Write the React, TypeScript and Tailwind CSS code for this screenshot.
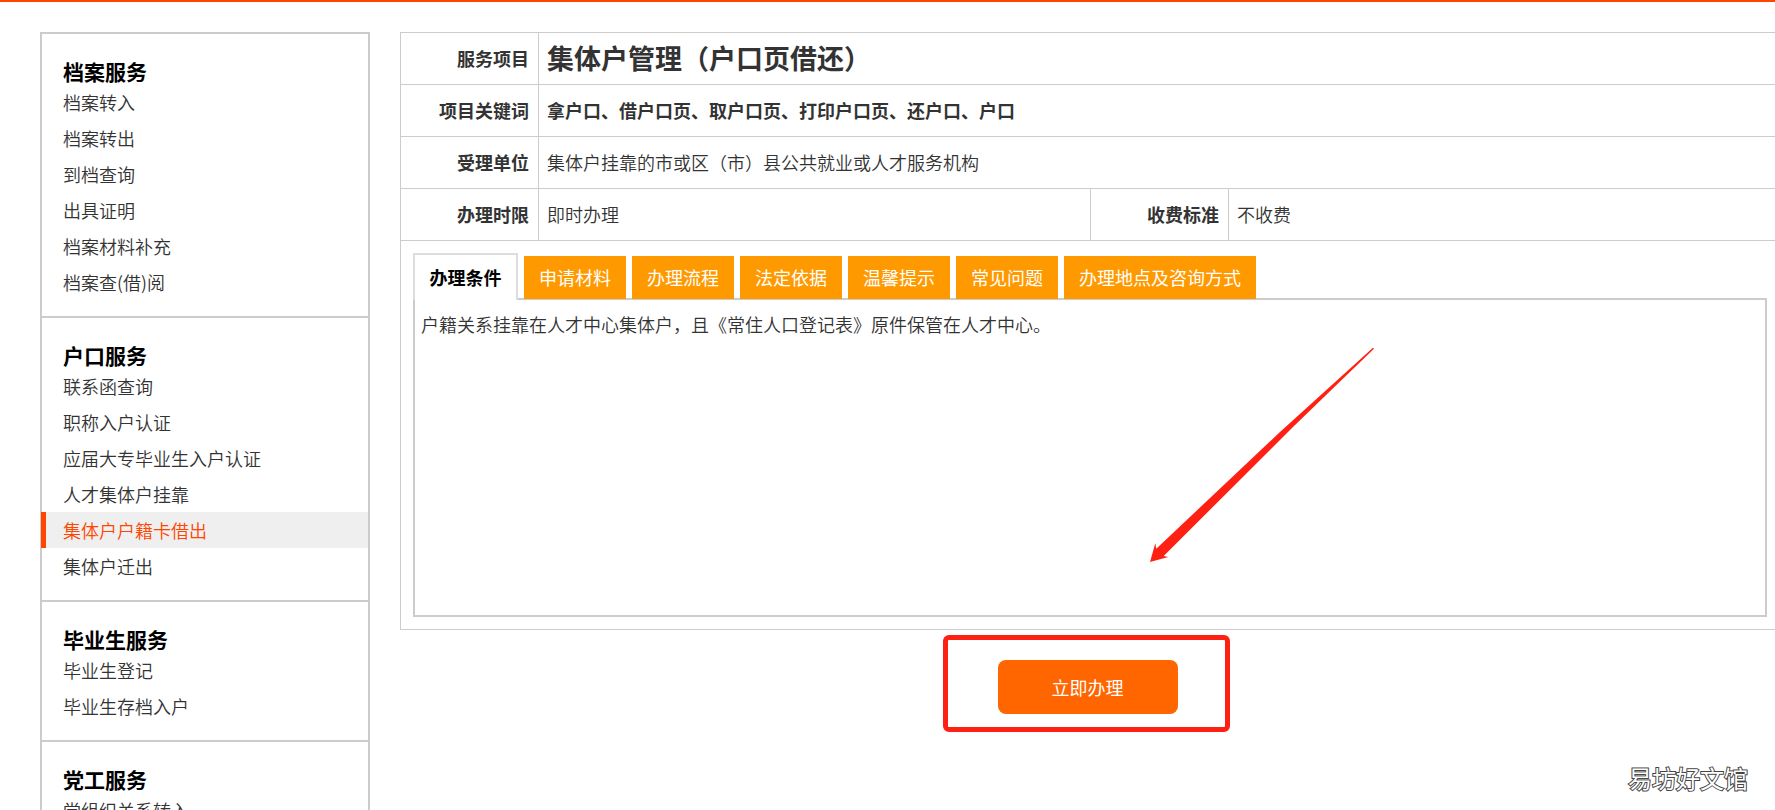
import { useState } from 'react'
import clsx from 'clsx'

const sections = [
  {
    title: '档案服务',
    items: ['档案转入', '档案转出', '到档查询', '出具证明', '档案材料补充', '档案查(借)阅'],
  },
  {
    title: '户口服务',
    items: ['联系函查询', '职称入户认证', '应届大专毕业生入户认证', '人才集体户挂靠', '集体户户籍卡借出', '集体户迁出'],
  },
  { title: '毕业生服务', items: ['毕业生登记', '毕业生存档入户'] },
  { title: '党工服务', items: ['党组织关系转入'] },
]

const tabs = ['办理条件', '申请材料', '办理流程', '法定依据', '温馨提示', '常见问题', '办理地点及咨询方式']

const labelCell = 'h-[52px] border-r border-b border-[#ccc] px-[9px] pb-0.5 text-right font-bold'
const valueCell = 'h-[52px] border-b border-[#ccc] px-2 pb-0.5 text-left'

function Sidebar({ current }: { current: string }) {
  return (
    <nav aria-label="服务导航" className="w-[330px] shrink-0 border-2 border-[#ccc]">
      {sections.map((section) => (
        <section key={section.title} className="border-b-2 border-[#ccc] pt-6 pb-4">
          <h2 className="pl-[21px] text-[21px] leading-[26px] font-bold text-black">{section.title}</h2>
          <ul>
            {section.items.map((item) => (
              <li key={item}>
                <a
                  href="#"
                  aria-current={item === current ? 'page' : undefined}
                  className={clsx(
                    '-ml-px block border-l-[5px] pl-[17px] leading-9',
                    item === current ? 'border-[#ff4500] bg-[#efefef] text-[#ff4500]' : 'border-transparent',
                  )}
                >
                  {item}
                </a>
              </li>
            ))}
          </ul>
        </section>
      ))}
    </nav>
  )
}

function ServiceTable() {
  return (
    <table className="w-full table-fixed border-separate border-spacing-0">
      <colgroup>
        <col className="w-[138px]" />
        <col />
        <col className="w-[138px]" />
        <col />
      </colgroup>
      <tbody>
        <tr>
          <th scope="row" className={labelCell}>服务项目</th>
          <td colSpan={3} className={valueCell}>
            <h1 className="text-[27px] leading-9 font-bold">集体户管理（户口页借还）</h1>
          </td>
        </tr>
        <tr>
          <th scope="row" className={labelCell}>项目关键词</th>
          <td colSpan={3} className={valueCell}>
            <strong className="font-bold">拿户口、借户口页、取户口页、打印户口页、还户口、户口</strong>
          </td>
        </tr>
        <tr>
          <th scope="row" className={labelCell}>受理单位</th>
          <td colSpan={3} className={valueCell}>集体户挂靠的市或区（市）县公共就业或人才服务机构</td>
        </tr>
        <tr>
          <th scope="row" className={labelCell}>办理时限</th>
          <td className={clsx(valueCell, 'border-r')}>即时办理</td>
          <th scope="row" className={labelCell}>收费标准</th>
          <td className={valueCell}>不收费</td>
        </tr>
      </tbody>
    </table>
  )
}

function Details() {
  const [active, setActive] = useState(0)
  return (
    <div className="py-3 pr-[14px] pl-3">
      <div role="tablist" className="relative z-10 -mb-0.5 flex items-end gap-1.5">
        {tabs.map((tab, i) => (
          <button
            key={tab}
            id={`tab-${i}`}
            type="button"
            role="tab"
            aria-selected={i === active}
            aria-controls="panel"
            onClick={() => setActive(i)}
            className={clsx(
              'whitespace-nowrap pb-0.5',
              i === active
                ? 'h-[47px] min-w-[105px] border-2 border-b-0 border-[#ddd] bg-white px-3 font-bold text-black'
                : 'mb-px h-[43px] bg-[#ff9900] px-[15px] font-normal text-white',
            )}
          >
            {tab}
          </button>
        ))}
      </div>
      <div
        id="panel"
        role="tabpanel"
        aria-labelledby={`tab-${active}`}
        className="relative min-h-[319px] border-2 border-[#ccc] p-1.5"
      >
        {active === 0 && <p className="leading-9">户籍关系挂靠在人才中心集体户，且《常住人口登记表》原件保管在人才中心。</p>}
        <svg
          aria-hidden="true"
          viewBox="0 0 224 214"
          className="pointer-events-none absolute top-12 left-[735px] h-[214px] w-[224px] fill-[#ff2014]"
        >
          <path d="M0 214 5.3 195.3 6.3 200.7 130 84 222.7 0H223.7V1L144 78 13.7 208 18.3 209Z" />
        </svg>
      </div>
    </div>
  )
}

export default function App() {
  return (
    <div className="relative h-screen overflow-hidden border-t-2 border-[#ff4500] bg-white font-['Noto_Sans_CJK_SC',sans-serif] text-[18px] leading-9 font-[350] text-[#333]">
      <div className="flex items-start gap-[30px] pt-[30px] pl-10">
        <Sidebar current="集体户户籍卡借出" />
        <main className="min-w-0 flex-1">
          <div className="-mr-[7px] border border-[#ccc]">
            <ServiceTable />
            <Details />
          </div>
          <div className="flex justify-center pt-[30px]">
            <div className="relative">
              <button type="button" className="block h-[54px] w-[180px] rounded-lg bg-[#ff6600] font-normal text-white">
                立即办理
              </button>
              <div className="pointer-events-none absolute -top-[25px] -right-[52px] -bottom-[18px] -left-[55px] rounded-md border-5 border-[#ff2014]" />
            </div>
          </div>
        </main>
      </div>
      <div className="absolute right-[27px] bottom-4 text-2xl font-normal text-white [paint-order:stroke] [-webkit-text-stroke:2px_#444]">
        易坊好文馆
      </div>
    </div>
  )
}
